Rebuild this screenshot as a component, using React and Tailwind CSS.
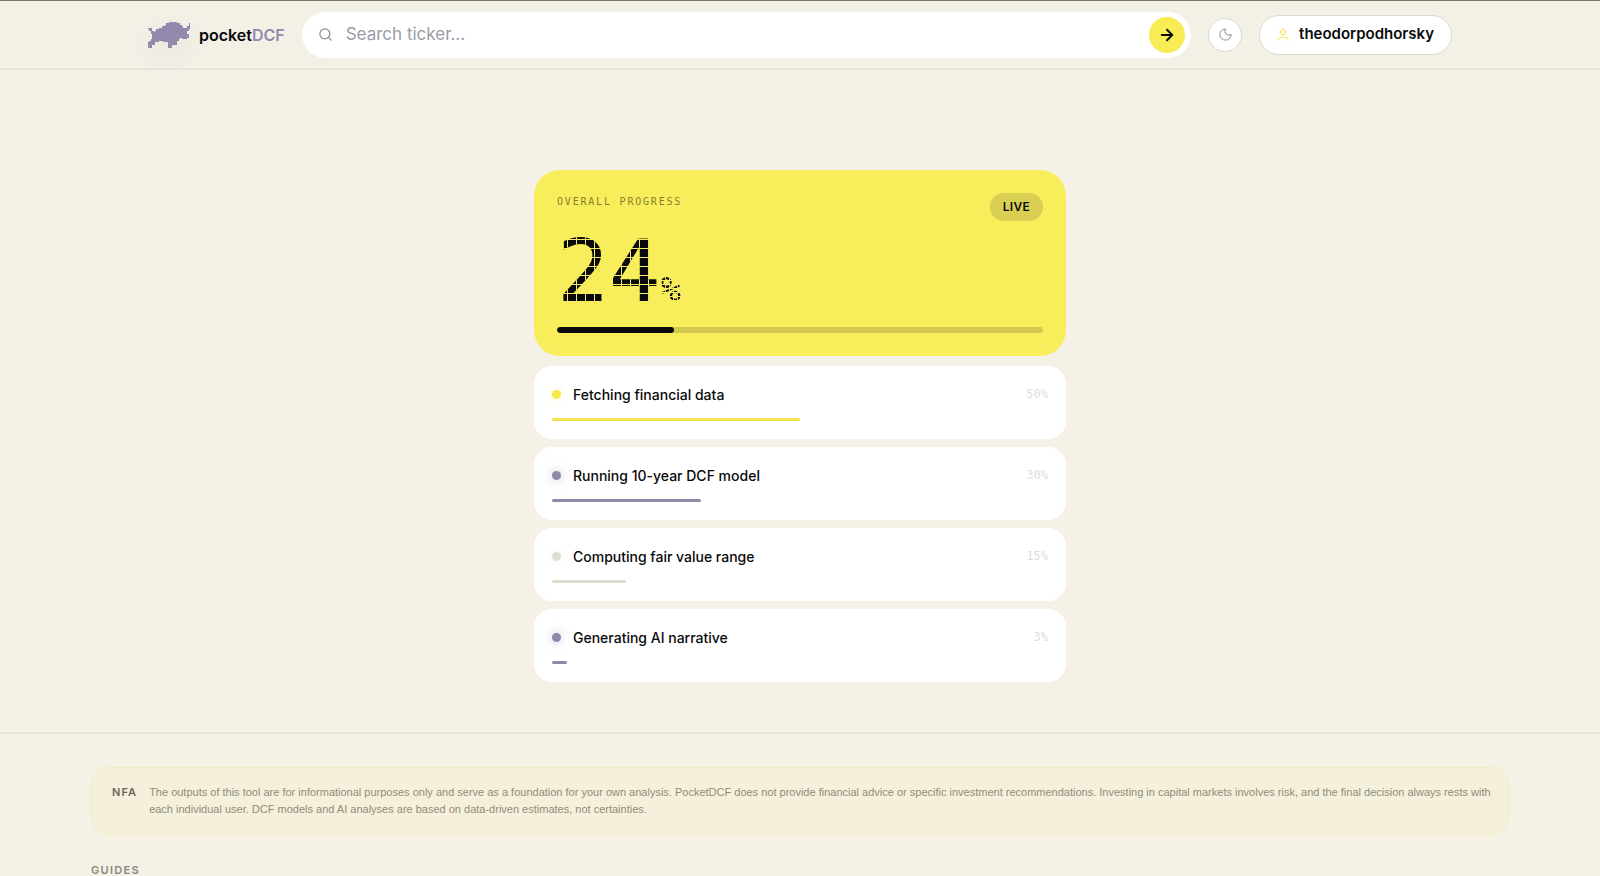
import { useState } from "react";
import { ArrowRight, Moon, Search } from "lucide-react";

const steps = [
  {
    label: "Fetching financial data",
    value: 50,
    dot: "bg-[#f7ea4e] shadow-[0_0_8px_#f7ea4e66]",
    bar: "bg-[#f3e34f]",
  },
  {
    label: "Running 10-year DCF model",
    value: 30,
    dot: "bg-[#8f88a8] shadow-[0_0_10px_#8f88a880]",
    bar: "bg-[#8f88a8]",
  },
  {
    label: "Computing fair value range",
    value: 15,
    dot: "bg-[#e0ddd2] shadow-[0_0_8px_#e0ddd266]",
    bar: "bg-[#e0dccb]",
  },
  {
    label: "Generating AI narrative",
    value: 3,
    dot: "bg-[#8f88a8] shadow-[0_0_10px_#8f88a880]",
    bar: "bg-[#8f88a8]",
  },
];

// [row, first column, last column]
const bullSpans = [
  [0, 15, 20],
  [1, 13, 22], [1, 29, 29],
  [2, 12, 23], [2, 29, 29],
  [3, 10, 24], [3, 28, 29],
  [4, 0, 2], [4, 8, 29],
  [5, 1, 2], [5, 6, 28],
  [6, 2, 3], [6, 5, 27],
  [7, 2, 27],
  [8, 3, 28],
  [9, 3, 28],
  [10, 3, 28],
  [11, 3, 22], [11, 24, 27],
  [12, 2, 21],
  [13, 1, 7], [13, 11, 20],
  [14, 0, 4], [14, 14, 20],
  [15, 0, 4], [15, 14, 17], [15, 18, 20],
  [16, 0, 2], [16, 14, 16],
  [17, 0, 2], [17, 14, 16],
];

const BullLogo = () => (
  <svg
    viewBox="0 0 30 18"
    className="h-[26px] w-[42px] drop-shadow-[0_8px_12px_#8f88a81f]"
    preserveAspectRatio="none"
    shapeRendering="crispEdges"
    fill="#9389ad"
    aria-hidden="true"
  >
    {bullSpans.map(([row, from, to]) => (
      <rect
        key={`${row}-${from}`}
        x={from}
        y={row}
        width={to - from + 1}
        height={1}
      />
    ))}
  </svg>
);

const UserIcon = () => (
  <svg
    viewBox="0 0 12 14"
    className="h-[14px] w-3"
    fill="none"
    stroke="#f7ea6a"
    strokeWidth="1.2"
    aria-hidden="true"
  >
    <path d="M6 1 9 4 6 7.4 3 4Z" strokeLinejoin="round" />
    <path d="M1 13v-1.2c0-1.3 1-2.3 2.300-2.300h5.400c1.300 0 2.300 1 2.300 2.300V13" />
  </svg>
);

const Header = () => {
  const [ticker, setTicker] = useState("");

  return (
    <header className="border-t border-b-2 border-t-[#7d756c] border-b-[#e9e5da] bg-[#f3f0e6]">
      <div className="mx-auto flex h-[67px] max-w-[1304px] items-center gap-[17px]">
        <a href="/" className="flex items-center gap-[9px]">
          <BullLogo />
          <span className="text-[16px] font-semibold text-[#0a0a0a]">
            pocket<span className="text-[#9389ad]">DCF</span>
          </span>
        </a>

        <form
          onSubmit={(e) => e.preventDefault()}
          className="flex h-[46px] flex-1 items-center rounded-full bg-white pr-[6px] pl-4"
        >
          <Search size={15} strokeWidth={2} className="text-[#8a8a8a]" />
          <input
            type="text"
            aria-label="Search ticker"
            placeholder="Search ticker..."
            value={ticker}
            onChange={(e) => setTicker(e.target.value)}
            className="ml-[13px] min-w-0 flex-1 bg-transparent text-[17px] text-[#0a0a0a] outline-none placeholder:text-[#9b9ba6]"
          />
          <button
            type="submit"
            aria-label="Search"
            className="flex size-9 items-center justify-center rounded-full bg-[#f8ec55] text-[#0a0a0a]"
          >
            <ArrowRight size={18} strokeWidth={2.5} />
          </button>
        </form>

        <button
          type="button"
          aria-label="Toggle dark mode"
          className="flex size-[34px] items-center justify-center rounded-full border border-[#dcd9d3] bg-white text-[#8a8a8a]"
        >
          <Moon size={15} strokeWidth={1.6} />
        </button>
        <button
          type="button"
          className="flex h-10 items-center gap-[10px] rounded-full border border-[#dcd9d3] bg-white px-[17px] text-[15px] font-semibold text-[#0a0a0a]"
        >
          <UserIcon />
          theodorpodhorsky
        </button>
      </div>
    </header>
  );
};

const ProgressCard = ({ value }) => (
  <section className="rounded-[26px] bg-[#f8ee5b] p-[23px] text-[#0a0a0a]">
    <div className="flex items-start justify-between">
      <h2 className="font-['DejaVu_Sans_Mono',monospace] text-[10px] leading-[18px] tracking-[0.18em] text-[#857e2a]">
        OVERALL PROGRESS
      </h2>
      <span className="flex h-7 items-center rounded-full bg-[#d9cf52] px-[13px] text-[12px] font-semibold tracking-wide">
        LIVE
      </span>
    </div>
    {/* the thin grid breaks the digits up into display pixels */}
    <p className="mt-[14px] flex h-[72px] items-baseline font-['DejaVu_Sans_Mono',monospace]">
      <span className="bg-[#0a0a0a] bg-[linear-gradient(to_right,#f8ee5b_1px,transparent_1px),linear-gradient(to_bottom,#f8ee5b_1px,transparent_1px)] bg-[size:9px_9px] bg-[position:1px_4px] bg-clip-text text-[86px] leading-[72px] text-transparent">
        {value}
      </span>
      <span className="bg-[#0a0a0a] bg-[linear-gradient(to_right,#f8ee5b_1px,transparent_1px),linear-gradient(to_bottom,#f8ee5b_1px,transparent_1px)] bg-[size:4px_4px] bg-clip-text text-[34px] leading-none text-transparent">
        %
      </span>
    </p>
    <div className="mt-5 h-[6px] overflow-hidden rounded-full bg-[#d3c94f]">
      <div
        className="h-full rounded-full bg-[#0a0a0a]"
        style={{ width: `${value}%` }}
      />
    </div>
  </section>
);

const StepCard = ({ step }) => (
  <li className="h-[73px] rounded-[18px] bg-white px-[18px] pt-[18px]">
    <div className="flex h-5 items-center">
      <span className={`size-[9px] rounded-full ${step.dot}`} />
      <span className="ml-3 flex-1 text-[14px] font-medium text-[#0a0a0a]">
        {step.label}
      </span>
      <span className="font-['DejaVu_Sans_Mono',monospace] text-[12px] text-[#dedede]">
        {step.value}%
      </span>
    </div>
    <div className="mt-[14px] h-[3px]">
      <div
        className={`h-full rounded-full ${step.bar}`}
        style={{ width: `${step.value}%` }}
      />
    </div>
  </li>
);

const Footer = () => (
  <footer className="border-t-2 border-[#e9e5da] pt-[33px]">
    <div className="mx-auto max-w-[1418px]">
      <div className="flex gap-3 rounded-[18px] border border-[#f3efbd] bg-[#f5f0dc] py-4 pr-3 pl-5 text-[11px] leading-[17px]">
        <strong className="font-semibold tracking-widest text-[#6b675a]">
          NFA
        </strong>
        <p className="font-['Liberation_Sans',sans-serif] text-[#918c78]">
          The outputs of this tool are for informational purposes only and serve
          as a foundation for your own analysis. PocketDCF does not provide
          financial advice or specific investment recommendations. Investing in
          capital markets involves risk, and the final decision always rests
          with each individual user. DCF models and AI analyses are based on
          data-driven estimates, not certainties.
        </p>
      </div>
      <h3 className="mt-[27px] text-[11px] leading-4 font-semibold tracking-[0.12em] text-[#89867b]">
        GUIDES
      </h3>
    </div>
  </footer>
);

const App = () => {
  return (
    <div className="min-h-screen bg-[#f5f1e7] font-['Inter',sans-serif]">
      <Header />
      <main className="mx-auto max-w-[532px] pt-[100px] pb-[50px]">
        <ProgressCard value={24} />
        <ul className="mt-[10px] space-y-2">
          {steps.map((step) => (
            <StepCard key={step.label} step={step} />
          ))}
        </ul>
      </main>
      <Footer />
    </div>
  );
};

export default App;
